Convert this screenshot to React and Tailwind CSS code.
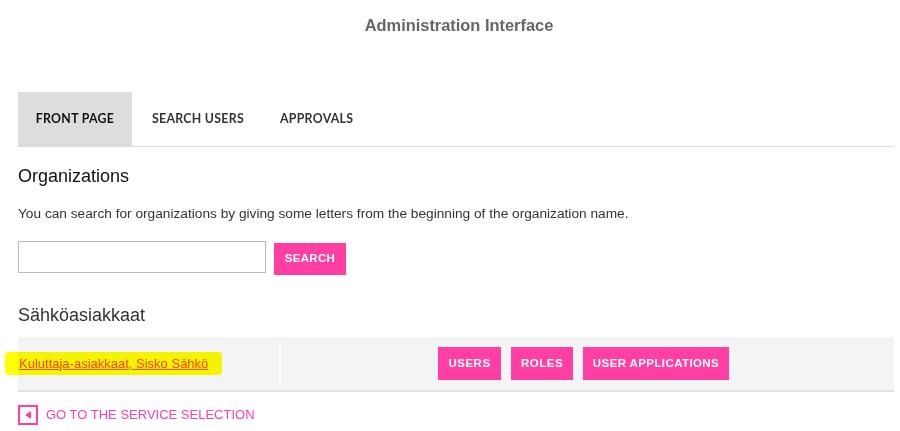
import React from "react";

const PINK = "bg-[#ff3fa4]";

export default function App() {
  return (
    <div className="w-[900px] h-[431px] bg-white overflow-hidden font-['Liberation_Sans',Arial,sans-serif]">
      <div className="pl-[18px] pr-[6px]">
        <h1 className="pt-[15px] pl-[6px] text-center text-[16.4px] leading-[20px] font-bold text-[#666]">
          Administration Interface
        </h1>

        <nav className="mt-[57px] flex border-b border-[#ddd] font-['Lato',sans-serif] text-[12.3px] font-bold tracking-[0.3px] text-[#333]">
          <div className="h-[54px] w-[114px] bg-[#dddddd] flex items-center justify-center text-[#111]">FRONT PAGE</div>
          <div className="h-[54px] pl-[20px] pr-[36px] flex items-center">SEARCH USERS</div>
          <div className="h-[54px] flex items-center">APPROVALS</div>
        </nav>

        <h2 className="mt-[17px] text-[18px] leading-[24px] text-[#111]">Organizations</h2>
        <p className="mt-[18px] text-[13.7px] leading-[16px] text-[#333]">
          You can search for organizations by giving some letters from the beginning of the organization name.
        </p>

        <div className="mt-[19px] flex items-start gap-[8px]">
          <input className="h-[32px] w-[248px] border border-[#bbb] bg-white" />
          <button className={`mt-[2px] h-[32px] w-[72px] ${PINK} text-white text-[11.5px] font-bold tracking-[0.3px]`}>
            SEARCH
          </button>
        </div>

        <h2 className="mt-[28px] text-[18px] leading-[24px] text-[#333]">Sähköasiakkaat</h2>

        <div className="mt-[10px] flex h-[55px] bg-[#f4f4f4] border-b-2 border-[#e2e2e2]">
          <div className="w-[263px] border-r-2 border-[#fafafa] flex items-center">
            <span className="relative ml-[1px] text-[13px] leading-[16px] text-[#ff3fa4] underline">
              Kuluttaja-asiakkaat, Sisko Sähkö
              <span className="absolute left-[-14px] top-[-4px] h-[23px] w-[217px] bg-[#ffff00] mix-blend-multiply rounded-[4px] blur-[0.6px]" />
            </span>
          </div>
          <div className="flex-1 flex items-center justify-center gap-[10px] pr-[8px]">
            <button className={`h-[33px] w-[63px] ${PINK} text-white text-[11.5px] font-bold tracking-[0.5px]`}>USERS</button>
            <button className={`h-[33px] w-[62px] ${PINK} text-white text-[11.5px] font-bold tracking-[0.5px]`}>ROLES</button>
            <button className={`h-[33px] w-[146px] ${PINK} text-white text-[11.5px] font-bold tracking-[0.4px]`}>USER APPLICATIONS</button>
          </div>
        </div>

        <div className="mt-[13px] flex items-center gap-[8px]">
          <div className="h-[20px] w-[20px] border-2 border-[#ff3fa4] flex items-center justify-center">
            <svg width="6" height="8" viewBox="0 0 6 8"><path d="M6 0 L0 4 L6 8 Z" fill="#ff3fa4" /></svg>
          </div>
          <span className="text-[13px] text-[#ff3fa4]">GO TO THE SERVICE SELECTION</span>
        </div>
      </div>
    </div>
  );
}
